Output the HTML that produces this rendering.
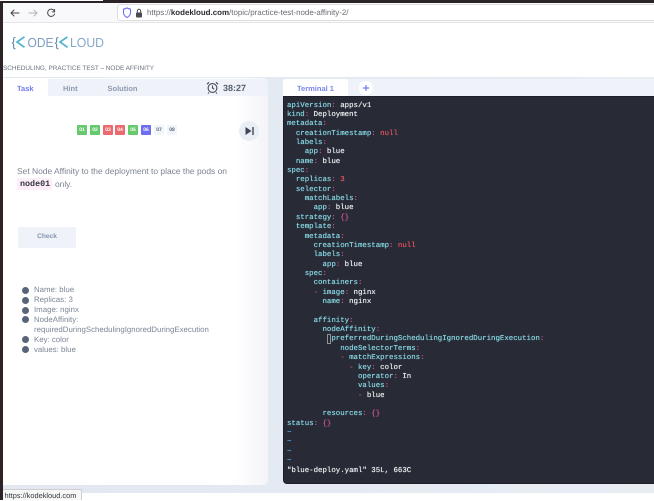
<!DOCTYPE html>
<html>
<head>
<meta charset="utf-8">
<style>
*{box-sizing:border-box}
html,body{margin:0;padding:0;width:654px;height:500px;overflow:hidden;background:#fff;font-family:"Liberation Sans",sans-serif;text-rendering:geometricPrecision}
.a{position:absolute}
.n{position:absolute;top:125px;width:10px;height:10px;border-radius:1px;font-size:5px;line-height:10px;text-align:center;font-weight:bold;color:#fff}
pre{margin:0;font-family:"Liberation Mono",monospace;font-size:7.4px;line-height:9.36px;color:#eceef0;text-shadow:0 0 .5px currentColor}
.k{color:#86d6e2}.p{color:#c9548f}.r{color:#e0555c}.d{color:#a8614f}.t{color:#5aa7e0}
.li{position:absolute;left:34px;font-size:7.85px;line-height:10px;color:#7d8797;white-space:nowrap}
.b{position:absolute;left:22px;width:7px;height:7px;border-radius:50%;background:#5a6478}
</style>
</head>
<body>
<!-- window chrome -->
<div class="a" style="left:0;top:0;width:654px;height:3px;background:#2b2326"></div>
<div class="a" style="left:0;top:0;width:103px;height:1px;background:#fff"></div>
<div class="a" style="left:0;top:3px;width:654px;height:20px;background:#f9f9fb"></div>
<div class="a" style="left:0;top:22px;width:654px;height:1px;background:#e6e6e9"></div>
<div class="a" style="left:117px;top:4px;width:537px;height:17px;background:#fff;border:1px solid #dedee2;border-right:0;border-radius:3px 0 0 3px"></div>
<svg class="a" style="left:8px;top:6px" width="50" height="14" viewBox="0 0 50 14" fill="none" stroke-linecap="round" stroke-linejoin="round">
<path d="M3 7h8M6 4L3 7l3 3" stroke="#45454d" stroke-width="1"/>
<path d="M21 7h8M26 4l3 3-3 3" stroke="#b4b4ba" stroke-width="1"/>
<path d="M46 4.500A3.600 3.600 0 1 0 46.600 8M46.600 3.500v2.400h-2.400" stroke="#45454d" stroke-width="1"/>
</svg>
<svg class="a" style="left:120px;top:7px" width="22" height="12" viewBox="0 0 22 12" fill="none">
<path d="M4.500 2.200L8 1l3.500 1.200v3.300C11.500 8 9.500 9.800 8 10.500 6.500 9.800 4.500 8 4.500 5.500z" transform="translate(-1 0)" stroke="#6d6df0" stroke-width="1.100"/>
<rect x="16" y="5.500" width="6" height="5" rx="1" fill="#4a4a52"/>
<path d="M17.300 5.500V4a1.700 1.700 0 0 1 3.400 0v1.500" stroke="#4a4a52" stroke-width="1"/>
</svg>
<div class="a" style="left:147px;top:8px;font-size:7.95px;line-height:10px;color:#6b6b73;white-space:nowrap">https://<b style="color:#2b2b33;font-weight:bold">kodekloud.com</b>/topic/practice-test-node-affinity-2/</div>

<!-- logo -->
<svg class="a" style="left:10px;top:33px" width="98" height="18" viewBox="0 0 98 18" fill="none">
<text x="1.500" y="13.500" font-family="Liberation Sans" font-size="13" fill="#5a87a8">{</text>
<path d="M14.500 3.800L7 9l7.500 5.300" stroke="#4fb4cf" stroke-width="1.700"/>
<text x="17.500" y="13.800" font-family="Liberation Sans" font-size="13" fill="#7d9cc2" textLength="26" lengthAdjust="spacingAndGlyphs">ODE</text>
<text x="44.500" y="13.500" font-family="Liberation Sans" font-size="13" fill="#5a87a8">{</text>
<path d="M57.500 3.800L50 9l7.500 5.300" stroke="#4fb4cf" stroke-width="1.700"/>
<text x="60" y="13.800" font-family="Liberation Sans" font-size="13" fill="#86a7cc" textLength="34" lengthAdjust="spacingAndGlyphs">LOUD</text>
</svg>
<div class="a" style="left:3px;top:64px;font-size:6.400px;line-height:9px;color:#6d7480;white-space:nowrap">SCHEDULING, PRACTICE TEST – NODE AFFINITY</div>

<!-- backdrop -->
<div class="a" style="left:3px;top:77px;width:651px;height:416px;background:linear-gradient(90deg,#e2e7f0,#e8edf4)"></div>

<!-- left panel -->
<div class="a" style="left:3px;top:78px;width:265px;height:407px;background:linear-gradient(90deg,#fff 88%,#f3f4f8);border-radius:0 5px 5px 0"></div>
<div class="a" style="left:48px;top:79px;width:220px;height:17px;background:#eff3f9;border-radius:0 5px 0 0"></div>
<div class="a" style="left:17px;top:83.500px;font-size:7.500px;line-height:10px;font-weight:bold;color:#6f7bee">Task</div>
<div class="a" style="left:63px;top:83.500px;font-size:7.500px;line-height:10px;font-weight:bold;color:#8e9ab0">Hint</div>
<div class="a" style="left:107.500px;top:83.500px;font-size:7.500px;line-height:10px;font-weight:bold;color:#8e9ab0">Solution</div>
<svg class="a" style="left:206px;top:81px" width="13" height="13" viewBox="0 0 13 13" fill="none" stroke="#434a55" stroke-width="1.100">
<circle cx="6.500" cy="7" r="4.400"/><path d="M6.500 4.500V7l1.700 1.200M1 3.200L3 1.300M12 3.200L10 1.300M3 11.500l-1 1M10 11.500l1 1"/>
</svg>
<div class="a" style="left:223px;top:82.500px;font-size:9px;line-height:11px;font-weight:bold;color:#59616e">38:27</div>

<div class="n" style="left:77px;background:#66ca6d">01</div>
<div class="n" style="left:90px;background:#66ca6d">02</div>
<div class="n" style="left:103px;background:#ea6b6f">03</div>
<div class="n" style="left:115px;background:#ea6b6f">04</div>
<div class="n" style="left:128px;background:#66ca6d">05</div>
<div class="n" style="left:141px;background:#6e6df0">06</div>
<div class="n" style="left:154px;background:#f1f4f9;color:#5a6478">07</div>
<div class="n" style="left:167px;background:#f1f4f9;color:#5a6478">08</div>
<div class="a" style="left:239px;top:121px;width:20px;height:20px;border-radius:50%;background:#e9eef5"></div>
<svg class="a" style="left:239px;top:121px" width="20" height="20" viewBox="0 0 20 20"><path d="M6.500 6l6 4-6 4z" fill="#3d4656"/><rect x="13.300" y="6" width="1.400" height="8" fill="#3d4656"/></svg>

<div class="a" style="left:17px;top:165px;font-size:8.450px;line-height:12px;color:#7b8391;white-space:nowrap">Set Node Affinity to the deployment to place the pods on</div>
<div class="a" style="left:17px;top:178px;width:35px;height:12px;background:#fdeefa;border-radius:1px"></div>
<div class="a" style="left:20px;top:178px;font-family:'Liberation Mono',monospace;font-weight:bold;font-size:8.400px;line-height:12px;color:#33363c">node01</div>
<div class="a" style="left:55px;top:178px;font-size:8.400px;line-height:12px;color:#7b8391">only.</div>

<div class="a" style="left:18px;top:227px;width:58px;height:21px;background:#eff3f9;border-radius:1px"></div>
<div class="a" style="left:18px;top:231.500px;width:58px;text-align:center;font-size:6.600px;line-height:10px;font-weight:bold;color:#8590ab">Check</div>

<div class="b" style="top:287px"></div><div class="li" style="top:285px">Name: blue</div>
<div class="b" style="top:297px"></div><div class="li" style="top:295px">Replicas: 3</div>
<div class="b" style="top:306.500px"></div><div class="li" style="top:305px">Image: nginx</div>
<div class="b" style="top:316px"></div><div class="li" style="top:314.500px">NodeAffinity:</div>
<div class="li" style="top:324.500px">requiredDuringSchedulingIgnoredDuringExecution</div>
<div class="b" style="top:336px"></div><div class="li" style="top:334.500px">Key: color</div>
<div class="b" style="top:346px"></div><div class="li" style="top:344.500px">values: blue</div>

<!-- terminal -->
<div class="a" style="left:283px;top:79px;width:371px;height:18px;background:#eff3f9"></div>
<div class="a" style="left:283px;top:79px;width:65px;height:18px;background:#fff;border-radius:3px 3px 0 0"></div>
<div class="a" style="left:283px;top:83.500px;width:65px;text-align:center;font-size:7.500px;line-height:10px;font-weight:bold;color:#7c86ea">Terminal 1</div>
<div class="a" style="left:359px;top:81px;width:14px;height:14px;border-radius:50%;background:#fff"></div>
<svg class="a" style="left:359px;top:81px" width="14" height="14" viewBox="0 0 14 14"><path d="M7 4v6M4 7h6" stroke="#6f7bee" stroke-width="1.200"/></svg>
<div class="a" style="left:283px;top:96px;width:371px;height:388px;background:#282a36;border:1px solid #1e2029;border-right:0;border-radius:0 0 0 4px"></div>
<pre class="a" style="left:287px;top:101.500px"><span class="k">apiVersion</span><span class="p">:</span> apps/v1
<span class="k">kind</span><span class="p">:</span> Deployment
<span class="k">metadata</span><span class="p">:</span>
  <span class="k">creationTimestamp</span><span class="p">:</span> <span class="r">null</span>
  <span class="k">labels</span><span class="p">:</span>
    <span class="k">app</span><span class="p">:</span> blue
  <span class="k">name</span><span class="p">:</span> blue
<span class="k">spec</span><span class="p">:</span>
  <span class="k">replicas</span><span class="p">:</span> <span class="r">3</span>
  <span class="k">selector</span><span class="p">:</span>
    <span class="k">matchLabels</span><span class="p">:</span>
      <span class="k">app</span><span class="p">:</span> blue
  <span class="k">strategy</span><span class="p">:</span> <span class="p">{}</span>
  <span class="k">template</span><span class="p">:</span>
    <span class="k">metadata</span><span class="p">:</span>
      <span class="k">creationTimestamp</span><span class="p">:</span> <span class="r">null</span>
      <span class="k">labels</span><span class="p">:</span>
        <span class="k">app</span><span class="p">:</span> blue
    <span class="k">spec</span><span class="p">:</span>
      <span class="k">containers</span><span class="p">:</span>
      <span class="d">-</span> <span class="k">image</span><span class="p">:</span> nginx
        <span class="k">name</span><span class="p">:</span> nginx

      <span class="k">affinity</span><span class="p">:</span>
        <span class="k">nodeAffinity</span><span class="p">:</span>
          <span class="k">preferredDuringSchedulingIgnoredDuringExecution</span><span class="p">:</span>
            <span class="k">nodeSelectorTerms</span><span class="p">:</span>
            <span class="d">-</span> <span class="k">matchExpressions</span><span class="p">:</span>
              <span class="d">-</span> <span class="k">key</span><span class="p">:</span> color
                <span class="k">operator</span><span class="p">:</span> In
                <span class="k">values</span><span class="p">:</span>
                <span class="d">-</span> blue

        <span class="k">resources</span><span class="p">:</span> <span class="p">{}</span>
<span class="k">status</span><span class="p">:</span> <span class="p">{}</span>
<span class="t">~</span>
<span class="t">~</span>
<span class="t">~</span>
<span class="t">~</span>
"blue-deploy.yaml" 35L, 663C</pre>
<div class="a" style="left:326.500px;top:334px;width:4.500px;height:10px;border:1px solid #8f939c"></div>

<!-- status tooltip -->
<div class="a" style="left:3px;top:489px;width:79px;height:11px;background:#f7f7f7;border:1px solid #cfcfd2;border-bottom:0;border-left:0;border-radius:0 2px 0 0;font-size:7.400px;line-height:11px;color:#33363c;padding-left:1.500px;white-space:nowrap">https://kodekloud.com</div>
<!-- left edge -->
<div class="a" style="left:0;top:3px;width:3px;height:497px;background:#2b2326"></div>
</body>
</html>
